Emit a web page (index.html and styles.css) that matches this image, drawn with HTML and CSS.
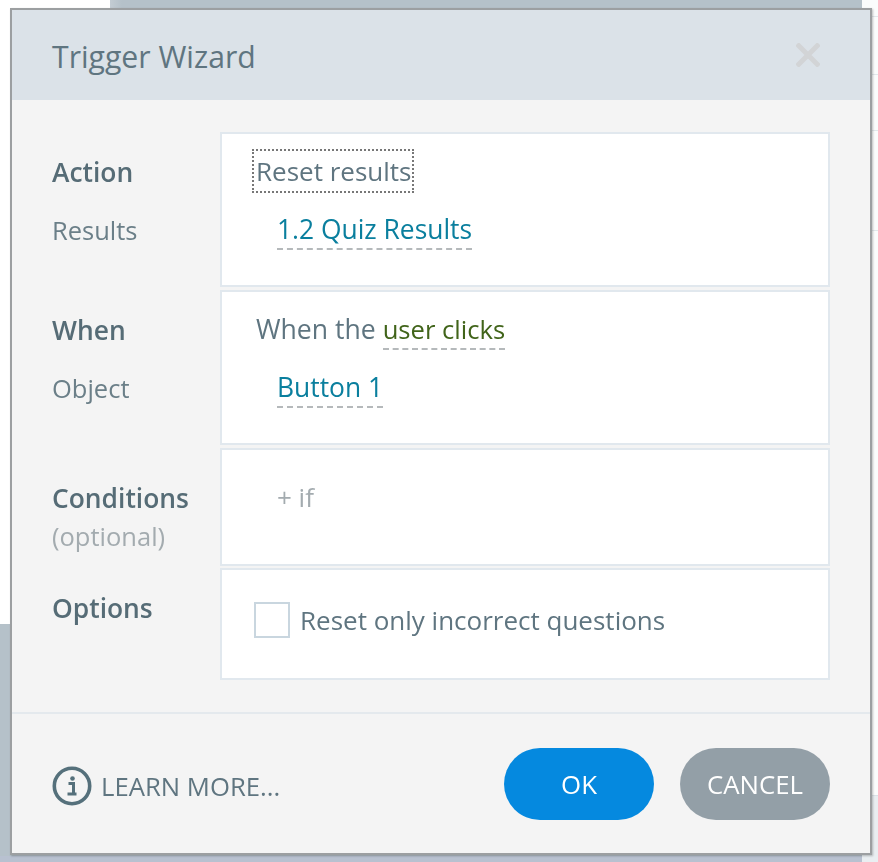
FILE: index.html
```html
<!DOCTYPE html>
<html lang="en">
<head>
<meta charset="utf-8">
<title>Trigger Wizard</title>
<link rel="stylesheet" href="styles.css">
</head>
<body>
<div class="backdrop">
  <div class="bg-white-left"></div>
  <div class="bg-panel"></div>
  <div class="bg-right"><i></i><i></i><i></i><i></i></div>
  <div class="bg-right-low"></div>
  <div class="bg-bottom"></div>
</div>
<section class="dialog">
  <header class="head">
    <h1>Trigger Wizard</h1>
    <svg class="close" viewBox="0 0 24 24" aria-label="Close"><path d="M1 1 L23 23 M23 1 L1 23"/></svg>
  </header>
  <div class="rows">
    <div class="row r-action">
      <div class="labels"><div class="lab strong">Action</div><div class="lab">Results</div></div>
      <div class="card">
        <div class="line"><span class="focus">Reset results</span></div>
        <div class="line indent"><span class="link blue">1.2 Quiz Results</span></div>
      </div>
    </div>
    <div class="row r-when">
      <div class="labels"><div class="lab strong">When</div><div class="lab">Object</div></div>
      <div class="card">
        <div class="line plain">When the <span class="link green">user clicks</span></div>
        <div class="line indent"><span class="link blue">Button 1</span></div>
      </div>
    </div>
    <div class="row r-cond">
      <div class="labels"><div class="lab strong">Conditions</div><div class="lab muted">(optional)</div></div>
      <div class="card">
        <div class="line indent muted">+ if</div>
      </div>
    </div>
    <div class="row r-opt">
      <div class="labels"><div class="lab strong">Options</div></div>
      <div class="card">
        <label class="check"><span class="box"></span><span>Reset only incorrect questions</span></label>
      </div>
    </div>
  </div>
  <footer class="foot">
    <div class="learn">
      <svg class="info" viewBox="0 0 40 40" aria-hidden="true"><circle cx="20" cy="20" r="17.7" /><path class="glyph" d="M16.5 17.5h5v10.5h2.5M15.5 28h9"/><circle class="dot" cx="20.5" cy="12.5" r="2.3"/></svg>
      <span>LEARN MORE...</span>
    </div>
    <div class="btns">
      <button class="btn ok">OK</button>
      <button class="btn cancel">CANCEL</button>
    </div>
  </footer>
</section>
</body>
</html>
```
FILE: styles.css
```css
* { box-sizing: border-box; }
html, body { margin: 0; padding: 0; }
body {
  width: 878px; height: 862px; overflow: hidden; position: relative;
  background: #b5c1c9;
  font-family: "Open Sans", "Noto Sans", sans-serif;
  color: #5a6f78;
}
.backdrop { position: absolute; inset: 0; }
.bg-white-left { position: absolute; left: 0; top: 0; width: 110px; height: 8px; background: #fff; }
.bg-white-left::after { content: ""; position: absolute; left: 0; top: 8px; width: 10px; height: 616px; background: #fff; }
.bg-panel { position: absolute; left: 110px; top: 0; width: 312px; height: 8px; background: linear-gradient(90deg,#c3ccd3,#b5c1c9 12px); }
.bg-right { position: absolute; left: 862px; top: 0; width: 16px; height: 795px; background: #fbfcfc; }
.bg-right i { position: absolute; left: 0; width: 16px; height: 1px; background: #e3e8eb; }
.bg-right i:nth-child(1) { top: 16px; }
.bg-right i:nth-child(2) { top: 74px; }
.bg-right i:nth-child(3) { top: 130px; }
.bg-right i:nth-child(4) { top: 230px; }
.bg-right-low { position: absolute; left: 862px; top: 795px; width: 16px; height: 67px; background: #e9eef1; border-top: 1px solid #dbe2e7; }
.bg-bottom { position: absolute; left: 0; top: 856px; width: 862px; height: 6px; background: #b8c1d0; }

.dialog {
  position: absolute; left: 10px; top: 8px; width: 862px; height: 847px;
  background: #f4f4f4;
  border: 2px solid #9c9fa1;
  box-shadow: 1px 1px 2px rgba(0,0,0,.25);
  display: flex; flex-direction: column;
  filter: blur(0.35px);
}
.head {
  height: 90px; flex: none; background: #dbe2e8;
  display: flex; align-items: center; justify-content: space-between;
  padding: 0 50px 0 40px;
}
.head h1 { margin: 4px 0 0; font-size: 30.2px; font-weight: 400; color: #5f7580; line-height: 1; }
.close { width: 24px; height: 24px; }
.close path { stroke: #d2d4d6; stroke-width: 5; fill: none; }

.rows { padding: 32px 40px 0 40px; display: flex; flex-direction: column; gap: 3px; flex: none; }
.row { display: flex; }
.r-action, .r-when { height: 155px; }
.r-cond { height: 118px; }
.r-opt { height: 112px; margin-top: -1px; }

.labels { width: 168px; flex: none; padding-top: 20px; }
.lab { font-size: 25.5px; line-height: 40px; height: 58px; color: #6b7f88; }
.lab.strong { font-weight: 600; color: #566c76; font-size: 26.4px; }
.lab.muted { color: #a3abaf; height: auto; margin-top: -20px; }
.r-cond .labels { padding-top: 30px; }
.r-opt .labels { padding-top: 20px; }

.card {
  flex: 1; background: #fff; border: 2px solid #e1e8ee;
  padding: 17px 32px 0;
}
.line { font-size: 26px; line-height: 40px; height: 58px; color: #5f7580; white-space: nowrap; }
.plain { padding-left: 2px; font-size: 26.6px; }
.indent { padding-left: 23px; }
.muted { color: #a3abaf; }
.r-cond .card { padding-top: 27px; }
.focus { outline: 2px dotted #777; outline-offset: 0; display: inline-block; line-height: 40px; padding: 0 1px 0 2px; }
.link { border-bottom: 2px dashed #b5b9bb; display: inline-block; line-height: 37px; }
.blue { color: #0a7f9e; font-size: 26.4px; }
.green { color: #41641a; font-size: 25.6px; }

.check { display: flex; align-items: center; gap: 10px; font-size: 26px; color: #5f7580; margin-top: 15px; line-height: 36px; }
.box { width: 36px; height: 36px; background: #fff; border: 2px solid #c9d6df; flex: none; }

.foot {
  margin-top: 32px; border-top: 2px solid #e4e9ed; flex: 1;
  display: flex; align-items: center; justify-content: space-between;
  padding: 0 40px 0 40px;
}
.learn { display: flex; align-items: center; gap: 9px; font-size: 25.7px; color: #5f7580; margin-top: 5px; }
.info { width: 40px; height: 40px; flex: none; }
.info circle { fill: none; stroke: #55707b; stroke-width: 3.6; }
.info .glyph { fill: none; stroke: #55707b; stroke-width: 3; }
.info .dot { fill: #55707b; stroke: none; }
.btns { display: flex; gap: 26px; margin-top: 1px; }
.btn {
  width: 150px; height: 72px; border: 0; border-radius: 36px; color: #fff;
  font-family: inherit; font-size: 25.8px; padding: 0;
}
.ok { background: #0589df; }
.cancel { background: #939fa7; }
```
